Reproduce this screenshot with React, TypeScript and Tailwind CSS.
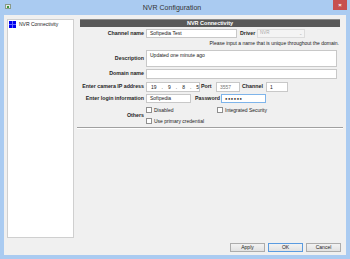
import React from "react";

const font = { fontFamily: '"Liberation Sans", Arial, sans-serif' };

function Label({ children }: { children: React.ReactNode }) {
  return (
    <div className="w-[66px] shrink-0 pr-[2px] text-right font-bold text-[5.3px] text-[#1e1e1e] leading-none whitespace-nowrap">
      {children}
    </div>
  );
}

function Box({
  className,
  children,
}: {
  className?: string;
  children?: React.ReactNode;
}) {
  return (
    <div
      className={
        "bg-white border border-[#c8c8c8] text-[5px] text-[#222] leading-none flex items-center px-[3px] whitespace-nowrap " +
        (className ?? "")
      }
    >
      {children}
    </div>
  );
}

function Check({ label }: { label: string }) {
  return (
    <div className="flex items-center gap-[2px] h-[6px]">
      <div className="w-[6px] h-[6px] bg-white border border-[#8f8f8f]" />
      <span className="text-[5px] text-[#222] leading-none whitespace-nowrap">{label}</span>
    </div>
  );
}

function Button({ text, primary }: { text: string; primary?: boolean }) {
  return (
    <div
      className={
        "w-[35px] h-[9px] flex items-center justify-center text-[5px] text-[#222] leading-none bg-gradient-to-b from-[#f2f2f2] to-[#e2e2e2] border " +
        (primary ? "border-[#5a9be0]" : "border-[#acacac]")
      }
    >
      {text}
    </div>
  );
}

export default function App() {
  return (
    <div
      className="w-[350px] h-[259px] bg-[#aacbf1] flex flex-col overflow-hidden"
      style={font}
    >
      {/* title bar */}
      <div className="h-[15px] shrink-0 flex items-start relative">
        <div className="mt-[4px] ml-[5px] w-[6px] h-[5px] bg-[#e8e8e8] border border-[#8a9a8a] flex items-end">
          <div className="w-[2px] h-[2px] bg-[#3a9a3a] ml-[1px]" />
        </div>
        <div className="flex-1 text-center text-[7px] text-[#333] mt-[4px] leading-none">
          NVR Configuration
        </div>
        <div className="w-[14px] h-[10px] mr-[3px] bg-[#c75050] flex items-center justify-center">
          <span className="text-white text-[6px] font-bold leading-none">×</span>
        </div>
      </div>

      {/* client */}
      <div className="flex-1 mx-[4px] mb-[4px] bg-[#f0f0f0] flex flex-col px-[3px] pt-[4px] pb-[3px]">
        <div className="flex flex-1 gap-[6px]">
          {/* tree */}
          <div className="w-[67px] h-[219px] bg-white border border-[#cfcfcf] pt-[1px] pl-[1px]">
            <div className="flex items-center gap-[3px] h-[7px]">
              <div className="grid grid-cols-2 gap-[1px] w-[7px] h-[7px] bg-[#6a6aff]">
                <div className="bg-[#0000ee]" />
                <div className="bg-[#0000ee]" />
                <div className="bg-[#0000ee]" />
                <div className="bg-[#0000ee]" />
              </div>
              <span className="text-[5px] text-[#222] leading-none">NVR Connectivity</span>
            </div>
          </div>

          {/* form */}
          <div className="w-[260px] flex flex-col">
            <div className="h-[8px] bg-[#595959] border-t border-[#8a8a8a] flex items-center justify-center text-white font-bold text-[5.5px] leading-none">
              NVR Connectivity
            </div>

            <div className="flex items-center mt-[2px] h-[9px]">
              <Label>Channel name</Label>
              <Box className="w-[91px] h-[9px]">Softpedia Test</Box>
              <span className="ml-[3px] w-[14px] font-bold text-[5.3px] text-[#1e1e1e] leading-none">
                Driver
              </span>
              <div className="ml-[3px] w-[48px] h-[9px] bg-[#f4f4f4] border border-[#dcdcdc] flex items-center justify-between px-[2px] text-[4.5px] text-[#a8a8a8] leading-none">
                <span>NVR</span>
                <span className="text-[4px]">⌄</span>
              </div>
            </div>

            <div className="h-[10px] flex items-center justify-end pr-[1px] text-[5px] text-[#222] leading-none whitespace-nowrap">
              Please input a name that is unique throughout the domain.
            </div>

            <div className="flex items-center mt-[2px] h-[17px]">
              <Label>Description</Label>
              <Box className="w-[191px] h-[17px] !items-start pt-[2px]">
                Updated one minute ago
              </Box>
            </div>

            <div className="flex items-center mt-[2px] h-[10px]">
              <Label>Domain name</Label>
              <Box className="w-[191px] h-[10px]" />
            </div>

            <div className="flex items-center mt-[3px] h-[10px]">
              <Label>Enter camera IP address</Label>
              <Box className="w-[54px] h-[10px] gap-[5px] !px-[4px]">
                <span>19</span>
                <span>.</span>
                <span>9</span>
                <span>.</span>
                <span>8</span>
                <span>.</span>
                <span>5</span>
              </Box>
              <span className="ml-[1px] w-[15px] font-bold text-[5.3px] text-[#1e1e1e] leading-none">
                Port
              </span>
              <Box className="w-[24px] h-[10px] !text-[#777]">3557</Box>
              <span className="ml-[2px] w-[24px] font-bold text-[5.3px] text-[#1e1e1e] leading-none">
                Channel
              </span>
              <Box className="w-[22px] h-[10px]">1</Box>
            </div>

            <div className="flex items-center mt-[2px] h-[9px]">
              <Label>Enter login information</Label>
              <Box className="w-[45px] h-[9px]">Softpedia</Box>
              <span className="ml-[4px] w-[26px] font-bold text-[5.3px] text-[#1e1e1e] leading-none">
                Password
              </span>
              <Box className="w-[45px] h-[9px] !border-[#7eb4ea] tracking-[0.5px] !text-[4px]">
                ●●●●●●
              </Box>
            </div>

            <div className="flex items-center mt-[4px]">
              <Label>Others</Label>
              <div className="flex flex-col gap-[5px]">
                <div className="flex">
                  <div className="w-[71px]">
                    <Check label="Disabled" />
                  </div>
                  <Check label="Integrated Security" />
                </div>
                <Check label="Use primary credential" />
              </div>
            </div>

            <div className="mt-[3px] -ml-[3px] w-[266px] h-[2px] border-t border-[#a0a0a0] border-b border-b-white" />
          </div>
        </div>

        <div className="flex justify-end gap-[3px] pr-[2px] mt-[5px]">
          <Button text="Apply" />
          <Button text="OK" primary />
          <Button text="Cancel" />
        </div>
      </div>
    </div>
  );
}
